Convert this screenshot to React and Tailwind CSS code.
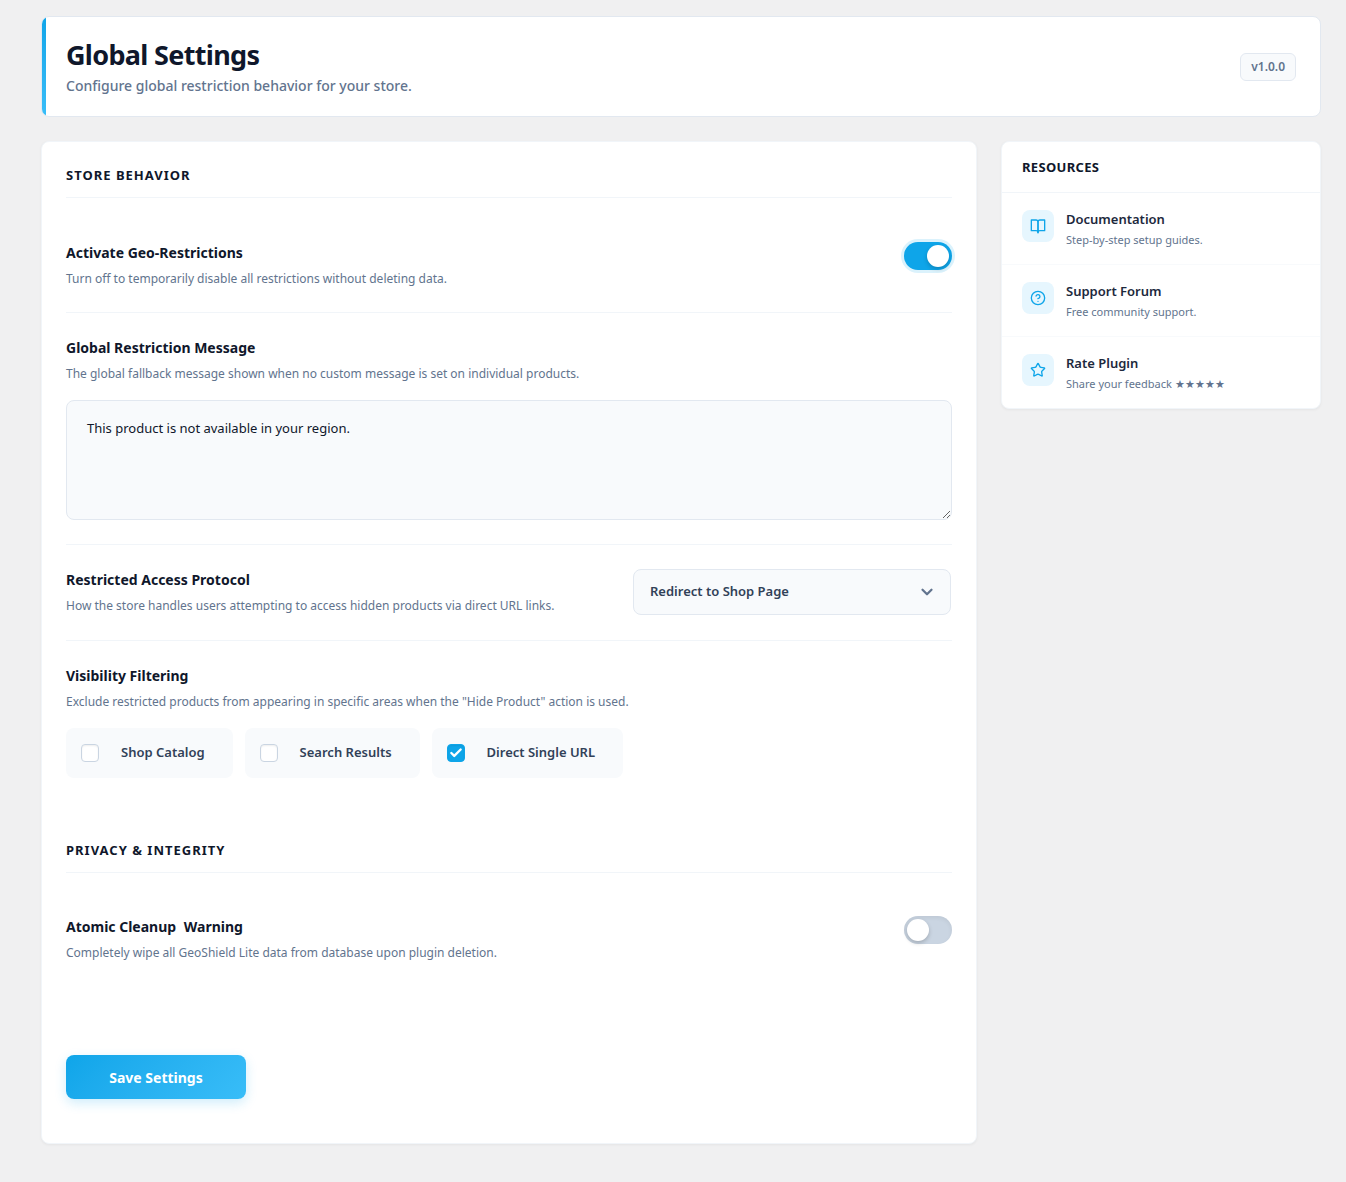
import React, { useState } from "react";
import { Check, ChevronDown, CircleHelp, Star } from "lucide-react";

function BookIcon({ size }) {
  return (
    <svg
      width={size}
      height={size}
      viewBox="0 0 24 24"
      fill="none"
      stroke="currentColor"
      strokeWidth="2"
      strokeLinecap="round"
      strokeLinejoin="round"
    >
      <path d="M2 3h7a3 3 0 0 1 3 3v16a3 3 0 0 0-3-3H2z" />
      <path d="M22 3h-7a3 3 0 0 0-3 3v16a3 3 0 0 1 3-3h7z" />
    </svg>
  );
}

const resources = [
  { title: "Documentation", text: "Step-by-step setup guides.", icon: BookIcon },
  { title: "Support Forum", text: "Free community support.", icon: CircleHelp },
  { title: "Rate Plugin", text: "Share your feedback ★★★★★", icon: Star },
];

function SectionTitle({ children }) {
  return (
    <h2 className="border-b border-slate-100 pb-3 text-[13px] leading-[19px] font-bold tracking-[1px] text-slate-900 uppercase">
      {children}
    </h2>
  );
}

function FieldText({ htmlFor, title, text }) {
  const Title = htmlFor ? "label" : "h3";
  return (
    <div>
      <Title
        htmlFor={htmlFor}
        className="block text-[14px] leading-[22px] font-bold text-slate-900"
      >
        {title}
      </Title>
      <p className="mt-[5px] text-[12px] leading-5 text-slate-500">{text}</p>
    </div>
  );
}

function Toggle({ id, checked, onChange }) {
  return (
    <input
      type="checkbox"
      role="switch"
      id={id}
      checked={checked}
      onChange={(e) => onChange(e.target.checked)}
      className="h-7 w-12 shrink-0 cursor-pointer appearance-none rounded-full bg-slate-300 p-[3px] shadow-[inset_0_2px_4px_rgba(0,0,0,0.06)] before:block before:size-[22px] before:rounded-full before:bg-white before:shadow-[0_2px_4px_rgba(0,0,0,0.2)] before:content-[''] checked:bg-[#0ea5e9] checked:shadow-[0_0_0_3px_rgba(14,165,233,0.15)] checked:before:translate-x-5"
    />
  );
}

function CheckCard({ id, label, checked, onChange }) {
  return (
    <label
      htmlFor={id}
      className="flex h-[50px] cursor-pointer items-center rounded-lg bg-slate-50 pr-7 pl-[15px] text-[13px] font-semibold text-slate-700"
    >
      <span className="mr-[22px] grid size-[18px] place-items-center">
        <input
          type="checkbox"
          id={id}
          checked={checked}
          onChange={(e) => onChange(e.target.checked)}
          className="col-start-1 row-start-1 size-[18px] appearance-none rounded border border-slate-300 bg-white shadow-[inset_0_1px_2px_rgba(0,0,0,0.07)] checked:border-[#0ea5e9] checked:bg-[#0ea5e9]"
        />
        {checked && (
          <Check
            size={14}
            strokeWidth={4}
            className="pointer-events-none z-10 col-start-1 row-start-1 text-white"
          />
        )}
      </span>
      {label}
    </label>
  );
}

function App() {
  const [active, setActive] = useState(true);
  const [cleanup, setCleanup] = useState(false);
  const [message, setMessage] = useState(
    "This product is not available in your region."
  );
  const [protocol, setProtocol] = useState("shop");
  const [filters, setFilters] = useState([
    { id: "catalog", label: "Shop Catalog", checked: false },
    { id: "search", label: "Search Results", checked: false },
    { id: "direct", label: "Direct Single URL", checked: true },
  ]);

  const handleFilterChange = (id, checked) => {
    setFilters(filters.map((f) => (f.id === id ? { ...f, checked } : f)));
  };

  return (
    <div className="min-h-screen bg-[#f0f0f1] pt-4 pr-[25px] pb-[38px] pl-[41px] font-['Noto_Sans','Open_Sans',sans-serif]">
      <header className="flex overflow-hidden rounded-lg border border-slate-200 bg-white">
        <div className="w-1 shrink-0 bg-linear-to-b from-[#0ea5e9] to-[#38bdf8]" />
        <div className="flex flex-1 items-center justify-between pt-5 pr-6 pb-[19px] pl-5">
          <div>
            <h1 className="text-[27px] leading-9 font-bold tracking-tight text-slate-900">
              Global Settings
            </h1>
            <p className="mt-[2px] text-[14px] leading-[22px] font-medium text-slate-500">
              Configure global restriction behavior for your store.
            </p>
          </div>
          <span className="rounded-md border border-slate-200 bg-slate-50 px-[10px] py-1 text-[12px] leading-[18px] font-semibold text-slate-500">
            v1.0.0
          </span>
        </div>
      </header>

      <div className="mt-6 flex items-start gap-6">
        <main className="min-w-0 flex-1 rounded-lg border border-slate-100 bg-white px-6 pt-6 pb-11 shadow-[0_1px_3px_rgba(0,0,0,0.05)]">
          <SectionTitle>Store Behavior</SectionTitle>

          <div className="flex items-start justify-between border-b border-slate-100 pt-11 pb-[23px]">
            <FieldText
              htmlFor="active"
              title="Activate Geo-Restrictions"
              text="Turn off to temporarily disable all restrictions without deleting data."
            />
            <Toggle id="active" checked={active} onChange={setActive} />
          </div>

          <div className="border-b border-slate-100 py-6">
            <FieldText
              htmlFor="message"
              title="Global Restriction Message"
              text="The global fallback message shown when no custom message is set on individual products."
            />
            <textarea
              id="message"
              value={message}
              onChange={(e) => setMessage(e.target.value)}
              className="mt-4 block h-[120px] w-full resize rounded-lg border border-slate-200 bg-slate-50 px-5 py-4 text-[13px] leading-[22px] text-slate-900"
            />
          </div>

          <div className="flex items-start justify-between border-b border-slate-100 py-6">
            <FieldText
              htmlFor="protocol"
              title="Restricted Access Protocol"
              text="How the store handles users attempting to access hidden products via direct URL links."
            />
            <div className="mr-px grid w-[318px] shrink-0 items-center">
              <select
                id="protocol"
                value={protocol}
                onChange={(e) => setProtocol(e.target.value)}
                className="col-start-1 row-start-1 h-[46px] w-full appearance-none rounded-lg border border-slate-200 bg-slate-50 pr-10 pl-4 text-[13px] font-semibold text-slate-700"
              >
                <option value="shop">Redirect to Shop Page</option>
                <option value="404">Show 404 Page</option>
              </select>
              <ChevronDown
                size={18}
                strokeWidth={3}
                className="pointer-events-none col-start-1 row-start-1 mr-[15px] justify-self-end text-slate-500"
              />
            </div>
          </div>

          <div className="pt-6">
            <FieldText
              title="Visibility Filtering"
              text='Exclude restricted products from appearing in specific areas when the "Hide Product" action is used.'
            />
            <div className="mt-4 flex flex-wrap gap-3">
              {filters.map((f) => (
                <CheckCard
                  key={f.id}
                  id={f.id}
                  label={f.label}
                  checked={f.checked}
                  onChange={(checked) => handleFilterChange(f.id, checked)}
                />
              ))}
            </div>
          </div>

          <div className="mt-[63px]">
            <SectionTitle>Privacy &amp; Integrity</SectionTitle>
          </div>
          <div className="flex items-start justify-between pt-[43px]">
            <FieldText
              htmlFor="cleanup"
              title={
                <>
                  Atomic Cleanup <span className="ml-1">Warning</span>
                </>
              }
              text="Completely wipe all GeoShield Lite data from database upon plugin deletion."
            />
            <Toggle id="cleanup" checked={cleanup} onChange={setCleanup} />
          </div>

          <button
            type="button"
            className="mt-[92px] block h-11 w-[180px] cursor-pointer rounded-lg bg-linear-135 from-[#0ea5e9] to-[#38bdf8] text-[14px] font-bold text-white shadow-[0_4px_12px_rgba(14,165,233,0.2)]"
          >
            Save Settings
          </button>
        </main>

        <aside className="w-80 shrink-0 overflow-hidden rounded-lg border border-slate-100 bg-white shadow-[0_1px_3px_rgba(0,0,0,0.05)]">
          <h2 className="border-b border-slate-100 px-5 py-[15px] text-[13px] leading-5 font-bold tracking-wide text-slate-900 uppercase">
            Resources
          </h2>
          {resources.map((item) => (
            <a
              key={item.title}
              href="#"
              className="flex items-start gap-3 border-b border-slate-50 px-5 pt-[17px] pb-[15px] last:border-b-0"
            >
              <span className="grid size-8 shrink-0 place-items-center rounded-lg bg-[#e6f6fe] text-[#0ea5e9]">
                <item.icon size={16} />
              </span>
              <span>
                <span className="block text-[13px] leading-[19px] font-semibold text-slate-800">
                  {item.title}
                </span>
                <span className="mt-[2px] block text-[11px] leading-[18px] text-slate-500">
                  {item.text}
                </span>
              </span>
            </a>
          ))}
        </aside>
      </div>
    </div>
  );
}

export default App;
